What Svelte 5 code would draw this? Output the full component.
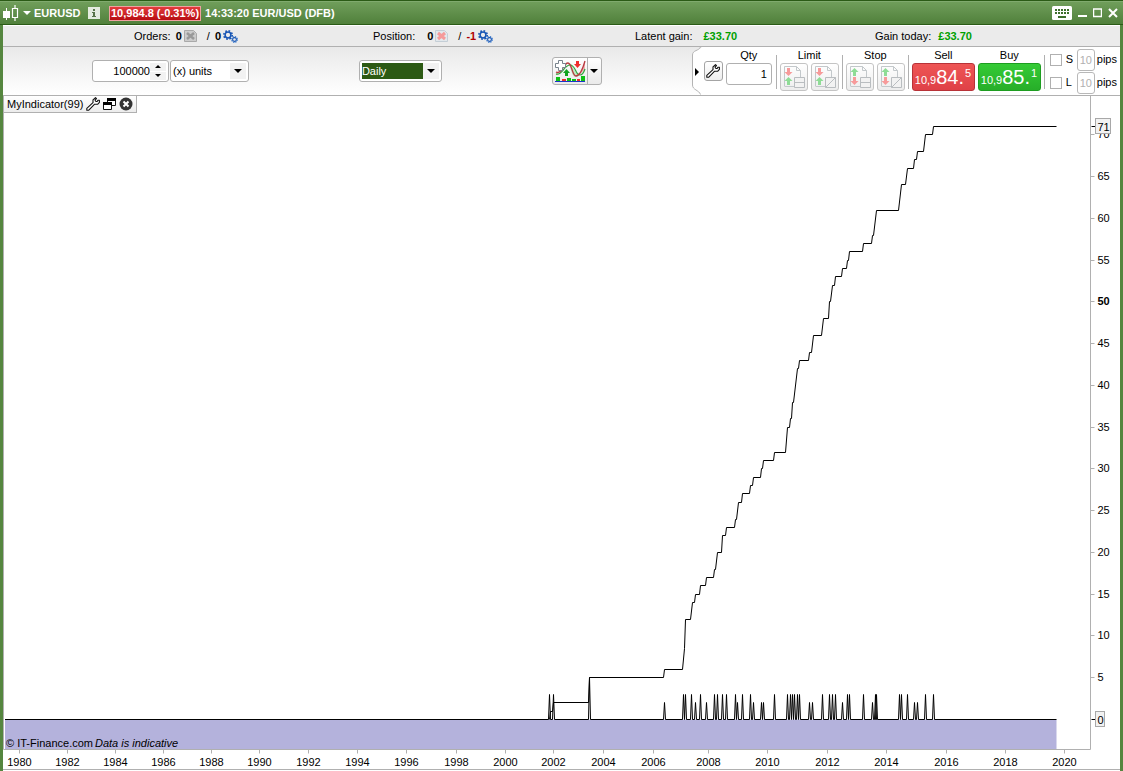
<script lang="ts">
	type Level = [from: number, to: number, value: number];

	let qty = $state('1');
	let bars = $state('100000');
	let unit = $state('(x) units');
	let timeframe = $state('Daily');
	let stopPips = $state('10');
	let limitPips = $state('10');
	let useStop = $state(false);
	let useLimit = $state(false);

	let width = $state(1117);
	let height = $state(675);

	const SPAN = 1117;
	const MAX = 71;

	const years = [
		16, 64, 112, 160, 208, 256, 305, 354, 403, 453, 502, 550, 600, 650, 705, 764, 824, 883, 943,
		1002, 1061
	].map((x, i) => ({ x, label: 1980 + i * 2 }));

	const levels: Level[] = [
		[547, 549, 1],
		[550, 585, 2],
		[586, 660, 5],
		[661, 679, 6],
		[681, 681, 8.5],
		[682, 687, 12],
		[689, 691, 14],
		[692, 696, 15],
		[697, 702, 16],
		[703, 710, 17],
		[711, 712, 18],
		[714, 718, 20],
		[719, 722, 22],
		[723, 731, 23],
		[732, 733, 24],
		[735, 738, 26],
		[739, 746, 27],
		[747, 749, 28],
		[750, 757, 29],
		[758, 759, 30],
		[760, 770, 31],
		[771, 782, 32],
		[784, 786, 35],
		[787, 788, 36],
		[789, 790, 38],
		[794, 795, 42],
		[796, 805, 43],
		[806, 808, 44],
		[810, 818, 46],
		[820, 825, 48],
		[826, 827, 50],
		[829, 831, 52],
		[832, 838, 53],
		[839, 843, 54],
		[844, 845, 55],
		[846, 859, 56],
		[860, 868, 57],
		[869, 870, 58],
		[873, 895, 61],
		[898, 902, 64],
		[904, 910, 66],
		[911, 913, 67],
		[914, 920, 68],
		[922, 929, 70],
		[930, 1053, 71]
	];

	const spikes: [number, number][] = [
		[546, 3], [550, 3], [586, 5], [661, 2], [680, 3], [682, 3], [688, 3], [692, 2], [697, 3],
		[703, 2], [711, 3], [714, 3], [719, 3], [723, 3], [732, 3], [734, 2], [739, 3], [747, 3],
		[750, 2], [758, 2], [760, 2], [771, 3], [784, 3], [787, 3], [789, 3], [791, 3], [794, 3],
		[796, 3], [806, 2], [809, 2], [819, 3], [826, 3], [829, 3], [832, 3], [839, 2], [844, 3],
		[846, 3], [860, 3], [869, 2], [872, 3], [873, 3], [896, 3], [898, 3], [904, 3], [911, 2],
		[914, 2], [922, 3], [930, 3]
	];

	const yTicks = [5, 10, 15, 20, 25, 30, 35, 40, 45, 50, 55, 60, 65, 70];

	const px = (x: number) => Math.round((x * width) / SPAN) + 0.5;
	const py = (v: number) => Math.round(height - 52 - (v / MAX) * (height - 82)) + 0.5;

	let axisX = $derived(width - 29.5);
	let axisY = $derived(height - 21.5);
	let endX = $derived(px(1053));

	let stairs = $derived(
		`M${px(546)} ${py(0)}` +
			levels.map(([a, b, v]) => `L${px(a)} ${py(v)}H${px(b)}`).join('')
	);
	let pulses = $derived(
		`M2 ${py(0)}` +
			spikes
				.map(([x, v]) => `L${px(x) - 1} ${py(0)}L${px(x)} ${py(v)}L${px(x) + 1} ${py(0)}`)
				.join('') +
			`H${endX}`
	);

	const step = (by: number) => {
		bars = String(Math.max(0, Number(bars) + by));
	};
</script>

{#snippet arrow()}
	<svg class="arrow" width="8" height="4" viewBox="0 0 8 4" aria-hidden="true">
		<path d="M0 0h8L4 4z" />
	</svg>
{/snippet}

{#snippet gears()}
	<svg width="15" height="13" viewBox="0 0 15 13" aria-hidden="true">
		<circle cx="5" cy="5" r="4.2" fill="none" stroke="#1554b4" stroke-width="1.6" stroke-dasharray="1.7 1.6" />
		<circle cx="5" cy="5" r="2.9" fill="#ebebeb" stroke="#1554b4" stroke-width="1.5" />
		<circle cx="11.5" cy="9.5" r="2.8" fill="none" stroke="#2a70cc" stroke-width="1.2" stroke-dasharray="1.3 .9" />
		<circle cx="11.5" cy="9.5" r="1.9" fill="#ebebeb" stroke="#1554b4" stroke-width="1.1" />
	</svg>
{/snippet}

{#snippet wrench()}
	<svg width="14" height="14" viewBox="0 0 14 14" aria-hidden="true">
		<path
			d="M9.5.7 7 2.8v2.900L.8 11.300v1.900h2L8.400 7.300h3.200l1.800-1.900V3.300h-1.500l-.7 1.200H10l-.8-.9V2.500l1.300-.8z"
			fill="#fff" stroke="#111" stroke-width="1.100" stroke-linejoin="round" />
	</svg>
{/snippet}

{#snippet orderIcon(flip: boolean, slash: boolean)}
	<svg width="24" height="24" viewBox="0 0 24 24" aria-hidden="true">
		<path d="M2.500 21.500v-20h12l4 4v7M14.500 1.500v4h4M3 21.500h10" fill="none" stroke="#c3c8cb" />
		{#if slash}
			<path d="M12.500 12.500h10v10h-10zM12.500 22.500l10-10" fill="#f2f2f2" stroke="#b9bdc0" />
		{:else}
			<path d="M12.500 12.500h10v10h-10zM12.500 17.500h10" fill="#f2f2f2" stroke="#b9bdc0" />
		{/if}
		<path d="M5 3h3v4h2.500l-4 4-4-4H5z" fill={flip ? '#8fdc96' : '#f79a9a'} transform={flip ? 'rotate(180 6.500 7)' : undefined} />
		<path d="M5 20h3v-4h2.500l-4-4-4 4H5z" fill={flip ? '#f79a9a' : '#8fdc96'} transform={flip ? 'rotate(180 6.500 16)' : undefined} />
	</svg>
{/snippet}

<main class="window">
	<header class="titlebar">
		<button class="plain chart-type" aria-label="Chart type">
			<svg width="16" height="16" viewBox="0 0 16 16" aria-hidden="true">
				<path d="M0 6h7v7H0zM3 3h1v12H3z" fill="#fff" />
				<path d="M9.500 3.500h5v9h-5zM12 0v3M12 13v3" fill="none" stroke="#fff" stroke-width="1.200" />
			</svg>
			<svg width="8" height="5" viewBox="0 0 8 5" aria-hidden="true"><path d="M0 0h8L4 4z" fill="#fff" /></svg>
		</button>
		<h1>EURUSD</h1>
		<button class="plain info" aria-label="Information">
			<svg width="12" height="12" viewBox="0 0 12 12" aria-hidden="true">
				<path d="M0 0h12v12H0z" fill="#e4ece0" />
				<path d="M5 2h2v2H5zM4 5h3v4h1v1H4V9h1V6H4z" fill="#57744a" />
			</svg>
		</button>
		<strong class="quote">10,984.8 (-0.31%)</strong>
		<strong class="clock">14:33:20 EUR/USD (DFB)</strong>
		<div class="controls">
			<button class="plain" aria-label="Keyboard">
				<svg width="20" height="14" viewBox="0 0 20 14" aria-hidden="true">
					<rect width="20" height="14" rx="1.500" fill="#fff" />
					<path d="M3 4h14M3 7h14" stroke="#3e6f2c" stroke-width="2" stroke-dasharray="2 1" />
					<path d="M6 11h8" stroke="#3e6f2c" stroke-width="2" />
				</svg>
			</button>
			<button class="plain" aria-label="Minimise">
				<svg width="9" height="10" viewBox="0 0 9 10" aria-hidden="true"><path d="M0 8h9" stroke="#fff" stroke-width="2" /></svg>
			</button>
			<button class="plain" aria-label="Maximise">
				<svg width="9" height="10" viewBox="0 0 9 10" aria-hidden="true"><path d="M.5 1v7.500h8V1M0 1h9" fill="none" stroke="#fff" stroke-width="1.500" /></svg>
			</button>
			<button class="plain" aria-label="Close">
				<svg width="10" height="10" viewBox="0 0 10 10" aria-hidden="true"><path d="m1 1 8 8M9 1 1 9" stroke="#fff" stroke-width="2" /></svg>
			</button>
		</div>
	</header>

	<section class="stats">
		<div class="stat">
			<span class="name">Orders:</span><b>0</b>
			<button class="plain" aria-label="Cancel orders">
				<svg width="13" height="12" viewBox="0 0 13 12" aria-hidden="true">
					<path d="M.5.5h9l3 3v8H.5z" fill="#ccc" stroke="#a9a9a9" />
					<path d="m3 3 7 6m0-6L3 9" stroke="#999" stroke-width="2.500" />
				</svg>
			</button>
			<span class="slash">/</span><b>0</b>
			<button class="plain" aria-label="Automatic orders">{@render gears()}</button>
		</div>
		<div class="stat">
			<span class="name wide">Position:</span><b>0</b>
			<button class="plain" aria-label="Close position">
				<svg width="13" height="12" viewBox="0 0 13 12" aria-hidden="true">
					<path d="M.5.5h9l3 3v8H.5z" fill="#e2e8ec" stroke="#c4ced6" />
					<path d="m3 3 7 6m0-6L3 9" stroke="#f59a9a" stroke-width="3" />
				</svg>
			</button>
			<span class="slash">/</span><b class="loss">-1</b>
			<button class="plain" aria-label="Automatic positions">{@render gears()}</button>
		</div>
		<div class="stat"><span class="name gain">Latent gain:</span><b class="profit">£33.70</b></div>
		<div class="stat"><span class="name">Gain today:</span><b class="profit">£33.70</b></div>
	</section>

	<section class="toolbar">
		<div class="tools">
			<div class="pair">
				<div class="field spin">
					<input type="text" aria-label="Number of units" bind:value={bars} />
					<div class="steps">
						<button class="plain" aria-label="Increase" onclick={() => step(1)}>
							<svg width="6" height="3" viewBox="0 0 6 3" aria-hidden="true"><path d="M0 3h6L3 0z" /></svg>
						</button>
						<button class="plain" aria-label="Decrease" onclick={() => step(-1)}>
							<svg width="6" height="3" viewBox="0 0 6 3" aria-hidden="true"><path d="M0 0h6L3 3z" /></svg>
						</button>
					</div>
				</div>
				<div class="field units">
					<select aria-label="Unit type" bind:value={unit}>
						<option>(x) units</option>
						<option>days</option>
					</select>
					{@render arrow()}
				</div>
			</div>
			<div class="field timeframe">
				<select aria-label="Timeframe" bind:value={timeframe}>
					<option>Daily</option>
					<option>Weekly</option>
					<option>Monthly</option>
				</select>
				{@render arrow()}
			</div>
			<div class="indicators">
				<button class="plain" aria-label="Add indicator">
					<svg width="31" height="24" viewBox="0 0 31 24" aria-hidden="true">
						<path d="M13 4c5-1 6 10 11 11 3 0 5-3 6-6-3 3-5 9-10 9-4-2-4-10-7-14" fill="#c4e8c4" />
						<path d="M1 14c6 5 7-8 12-10C9 8 7 16 1 16zM22 15c5-1 6-8 8-12v7c-3 3-5 6-8 5" fill="#f0b4b4" />
						<path d="M1 15c6 2 8-9 14-9s5 10 10 10c3 0 4-3 5-6" fill="none" stroke="#2fa53e" stroke-width="1.200" />
						<path d="M1 13c6 3 7-9 12-9 4 0 4 13 8 13s7-8 9-15" fill="none" stroke="#b83a40" stroke-width="1.300" />
						<path d="M3.500 1.500h4v3h3v4h-3v3h-4v-3h-3v-4h3z" fill="#fff" stroke="#78838c" />
						<path d="M21 2h3v3h2l-3.500 4L19 5h2z" fill="#f12c2c" />
						<path d="M10 17h3v-3h2l-3.500-4L8 14h2z" fill="#11a420" />
						<path d="M1 18h4v4H1zM12 19h4v3h-4zM17 20h4v2h-4zM26 17h4v5h-4z" fill="#0dc114" />
						<path d="M7 20h4v2H7zM22 20h3v2h-3z" fill="#e83030" />
						<path d="M0 22.500h30" stroke="#1c35c9" />
					</svg>
				</button>
				<button class="plain more" aria-label="Indicator menu">{@render arrow()}</button>
			</div>
		</div>

		<svg class="brace" width="10" height="48" viewBox="0 0 10 48" aria-hidden="true">
			<path d="M10 0C7 4 .5 3 .5 8v30c0 5 6.500 5 7.500 10h2z" fill="#fff" />
			<path d="M8.500 0C7 4 .5 3 .5 8v30c0 5 6.500 5 8 9.500" fill="none" stroke="#b4b4b4" />
			<path d="M3 21v8l4-4z" />
		</svg>

		<div class="order">
			<button class="tile wrench" aria-label="Order settings">{@render wrench()}</button>
			<div class="group">
				<label for="qty">Qty</label>
				<input id="qty" class="qty" type="text" bind:value={qty} />
			</div>
			<hr class="first" />
			<div class="group">
				<span>Limit</span>
				<div class="tiles">
					<button class="tile" aria-label="Limit order">{@render orderIcon(false, false)}</button>
					<button class="tile" aria-label="Limit line">{@render orderIcon(false, true)}</button>
				</div>
			</div>
			<hr />
			<div class="group">
				<span>Stop</span>
				<div class="tiles">
					<button class="tile" aria-label="Stop order">{@render orderIcon(true, false)}</button>
					<button class="tile" aria-label="Stop line">{@render orderIcon(true, true)}</button>
				</div>
			</div>
			<hr />
			<div class="deals">
				<div class="group">
					<span>Sell</span>
					<button class="deal sell"><small>10,9</small><big>84.</big><sup>5</sup></button>
				</div>
				<div class="group">
					<span>Buy</span>
					<button class="deal buy"><small>10,9</small><big>85.</big><sup>1</sup></button>
				</div>
			</div>
			<hr />
			<div class="protect">
				<div class="row">
					<label><input type="checkbox" bind:checked={useStop} />S</label>
					<input class="pips" type="text" aria-label="Stop distance" bind:value={stopPips} />
					<span>pips</span>
				</div>
				<div class="row">
					<label><input type="checkbox" bind:checked={useLimit} />L</label>
					<input class="pips" type="text" aria-label="Limit distance" bind:value={limitPips} />
					<span>pips</span>
				</div>
			</div>
		</div>
	</section>

	<section class="chart" bind:clientWidth={width} bind:clientHeight={height}>
		<svg {width} {height} role="img" aria-label="MyIndicator(99), EURUSD daily">
			<rect x="2" y={py(0)} width={endX - 2} height={axisY - py(0)} fill="#b4b2dc" />
			<path class="axis" d="M.5 0V{axisY}H{axisX}V0M0 {height - 1.5}H{width}" />
			<path class="line" d={pulses} />
			<path class="line" d={stairs} />

			{#each years as { x, label } (label)}
				<path class="axis" d="M{px(x)} {axisY}v4" />
				<text x={px(x)} y={height - 5} text-anchor="middle">{label}</text>
			{/each}

			{#each yTicks as v (v)}
				<path class="axis" d="M{axisX} {py(v)}h4" />
				<text x={axisX + 7} y={py(v) + 3} class:strong={v === 50}>{v}</text>
			{/each}

			<path class="line" d="M{axisX + 1} {py(71)}h4M{axisX + 1} {py(0)}h4" />
			<rect class="flag" x={axisX + 5} y={py(71) - 8} width="15" height="15" />
			<text x={axisX + 7} y={py(71) + 4}>71</text>
			<rect class="flag" x={axisX + 5} y={py(0) - 8} width="9" height="15" />
			<text x={axisX + 7} y={py(0) + 4}>0</text>

			<text x="3" y={height - 24}>© IT-Finance.com</text>
			<text class="note" x="92" y={height - 24}>Data is indicative</text>
		</svg>

		<div class="tab">
			<span>MyIndicator(99)</span>
			<button class="plain" aria-label="Indicator settings">{@render wrench()}</button>
			<button class="plain" aria-label="Detach indicator">
				<svg width="13" height="14" viewBox="0 0 13 14" aria-hidden="true">
					<path d="M4.500 1.500h8v7h-8z" fill="#fff" stroke="#111" />
					<path d="M4 1h9v3H4z" />
					<path d="M.5 5.500h8v7h-8z" fill="#fff" stroke="#111" />
					<path d="M0 5h9v3H0z" />
				</svg>
			</button>
			<button class="plain" aria-label="Remove indicator">
				<svg width="14" height="14" viewBox="0 0 14 14" aria-hidden="true">
					<circle cx="7" cy="7" r="6.500" fill="#333" />
					<path d="m4.500 4.500 5 5m0-5-5 5" stroke="#fff" stroke-width="2" />
				</svg>
			</button>
		</div>
	</section>
</main>

<style>
	:global(body) {
		background: #fff;
	}

	.window {
		box-sizing: border-box;
		display: flex;
		flex-direction: column;
		height: 100vh;
		min-height: 400px;
		border: solid #55863f;
		border-width: 0 3px;
		font: 11px/13px 'Liberation Sans', Arial, sans-serif;
		color: #000;
	}

	button,
	input,
	select {
		box-sizing: border-box;
		margin: 0;
		padding: 0;
		font: inherit;
		color: inherit;
	}

	svg {
		display: block;
		flex: none;
	}

	.plain {
		display: flex;
		align-items: center;
		border: 0;
		background: none;
	}

	.titlebar {
		display: flex;
		align-items: center;
		box-sizing: border-box;
		height: 25px;
		margin: 0 -3px;
		padding: 1px 5px 0 3px;
		border: solid #2b5b16;
		border-width: 1px 0;
		background: linear-gradient(#719f5c, #50803b);
		box-shadow: inset 0 1px #80aa6e;
		color: #fff;
	}

	.chart-type {
		gap: 4px;
		width: 28px;
	}

	h1 {
		width: 54px;
		margin: 0 0 0 3px;
		font-size: 11px;
	}

	.quote {
		margin: 0 4px 0 9px;
		padding: 0 1px;
		border: 1px solid #f0a0a0;
		background: linear-gradient(#e23c3c, #b80d12);
	}

	.controls {
		display: flex;
		align-items: center;
		gap: 6px;
		margin-left: auto;
	}

	.stats {
		display: grid;
		grid-template-columns: 239fr 262fr 240fr 245fr;
		box-sizing: border-box;
		height: 22px;
		padding: 1px 0 0 131px;
		border-bottom: 1px solid #b0b0b0;
		background: #ebebeb;
		box-shadow: inset 0 1px #fff;
	}

	.stat {
		display: flex;
		align-items: center;
		white-space: nowrap;
	}

	.stat .name {
		margin-right: 5px;
	}

	.stat .wide {
		margin-right: 12px;
	}

	.stat .gain {
		margin-right: 9px;
	}

	.stat b + button {
		margin-left: 2px;
	}

	.slash {
		margin: 0 5px 0 10px;
	}

	.loss {
		color: #b00000;
	}

	.profit {
		margin-left: 2px;
		color: #00a000;
	}

	.toolbar {
		display: flex;
		box-sizing: border-box;
		height: 49px;
		border-bottom: 1px solid #b0b0b0;
		background: linear-gradient(#e9e9e9, #fff);
	}

	.tools {
		display: flex;
		flex: 1;
		align-items: center;
		justify-content: space-between;
		padding: 0 90px 0 89px;
	}

	.pair {
		display: flex;
		gap: 1px;
	}

	.field {
		display: flex;
		align-items: center;
		box-sizing: border-box;
		height: 22px;
		padding: 2px;
		border: 1px solid #b0b0b0;
		border-radius: 3px;
		background: #fff;
	}

	.spin {
		width: 77px;
	}

	.spin input {
		flex: 1;
		min-width: 0;
		border: 0;
		background: none;
		text-align: right;
	}

	.steps {
		display: flex;
		flex-direction: column;
		gap: 1px;
	}

	.steps button {
		justify-content: center;
		width: 16px;
		height: 8px;
		background: #f2f2f2;
	}

	.field select {
		flex: 1;
		min-width: 0;
		height: 16px;
		border: 0;
		appearance: none;
		background: none;
	}

	.units {
		width: 79px;
	}

	.timeframe {
		width: 83px;
	}

	.timeframe select {
		background: #2c5a14;
		color: #fff;
	}

	.field .arrow {
		box-sizing: border-box;
		width: 16px;
		height: 16px;
		padding: 6px 4px;
		background: #f2f2f2;
		pointer-events: none;
	}

	.indicators {
		display: flex;
		box-sizing: border-box;
		width: 50px;
		height: 28px;
		border: 1px solid #b0b0b0;
		border-radius: 3px;
		background: linear-gradient(#fff, #eaeaea);
	}

	.indicators button {
		padding-left: 2px;
	}

	.indicators .more {
		flex: 1;
		justify-content: center;
		margin-left: 1px;
		padding: 0;
		border-left: 1px solid #b0b0b0;
	}

	.order {
		display: flex;
		align-items: flex-start;
		gap: 3px;
		padding: 1px 3px 0 2px;
		background: #fff;
	}

	.order hr {
		width: 1px;
		height: 34px;
		margin: 7px 0 0;
		border: 0;
		background: #b0b0b0;
	}

	.order .first {
		margin-left: 1px;
	}

	.group {
		display: flex;
		flex-direction: column;
		align-items: center;
		gap: 1px;
		padding-top: 1px;
	}

	.tile {
		display: flex;
		align-items: center;
		justify-content: center;
		width: 28px;
		height: 28px;
		border: 1px solid #c4c4c4;
		border-radius: 3px;
		background: linear-gradient(#fff, #ededed);
	}

	.order .wrench {
		width: 19px;
		height: 20px;
		margin-top: 13px;
		border-color: #a4a4a4;
	}

	.tiles,
	.deals {
		display: flex;
		gap: 3px;
	}

	.qty {
		width: 46px;
		height: 22px;
		padding-right: 4px;
		border: 1px solid #b0b0b0;
		border-radius: 3px;
		text-align: right;
	}

	.deal {
		display: flex;
		align-items: baseline;
		width: 63px;
		height: 28px;
		padding-left: 2px;
		border: 1px solid #b83238;
		border-radius: 3px;
		background: linear-gradient(#ee5555, #df4147);
		color: #fff;
		line-height: 26px;
	}

	.buy {
		border-color: #1d9d20;
		background: linear-gradient(#35cb36, #27ae29);
	}

	.deal small {
		font-size: 11px;
	}

	.deal big {
		font-size: 20px;
	}

	.deal sup {
		align-self: flex-start;
		margin-left: 1px;
		font-size: 11px;
		line-height: 19px;
	}

	.protect {
		margin-left: 2px;
	}

	.row {
		display: flex;
		align-items: center;
		gap: 2px;
		height: 23px;
	}

	.row label {
		display: flex;
		align-items: center;
		gap: 4px;
		width: 25px;
	}

	.row input[type='checkbox'] {
		width: 12px;
		height: 12px;
		border: 1px solid #b0b0b0;
		appearance: none;
		background: #fff;
	}

	.row input[type='checkbox']:checked {
		background: #55863f;
	}

	.pips {
		width: 18px;
		height: 22px;
		border: 1px solid #b8b8b8;
		border-radius: 3px;
		color: #b0b0b0;
		text-align: center;
	}

	.chart {
		position: relative;
		flex: 1;
		min-height: 0;
		overflow: hidden;
	}

	.axis {
		fill: none;
		stroke: #b0b0b0;
	}

	.line {
		fill: none;
		stroke: #000;
	}

	.flag {
		fill: #f2f2f2;
		stroke: #a8a8a8;
	}

	.strong {
		font-weight: bold;
	}

	.note {
		font-style: italic;
	}

	.tab {
		position: absolute;
		top: 0;
		left: 0;
		display: flex;
		align-items: center;
		gap: 3px;
		box-sizing: border-box;
		height: 17px;
		padding: 0 3px;
		border: solid #b0b0b0;
		border-width: 0 1px 1px;
		background: linear-gradient(#fff, #ececec);
	}
</style>
